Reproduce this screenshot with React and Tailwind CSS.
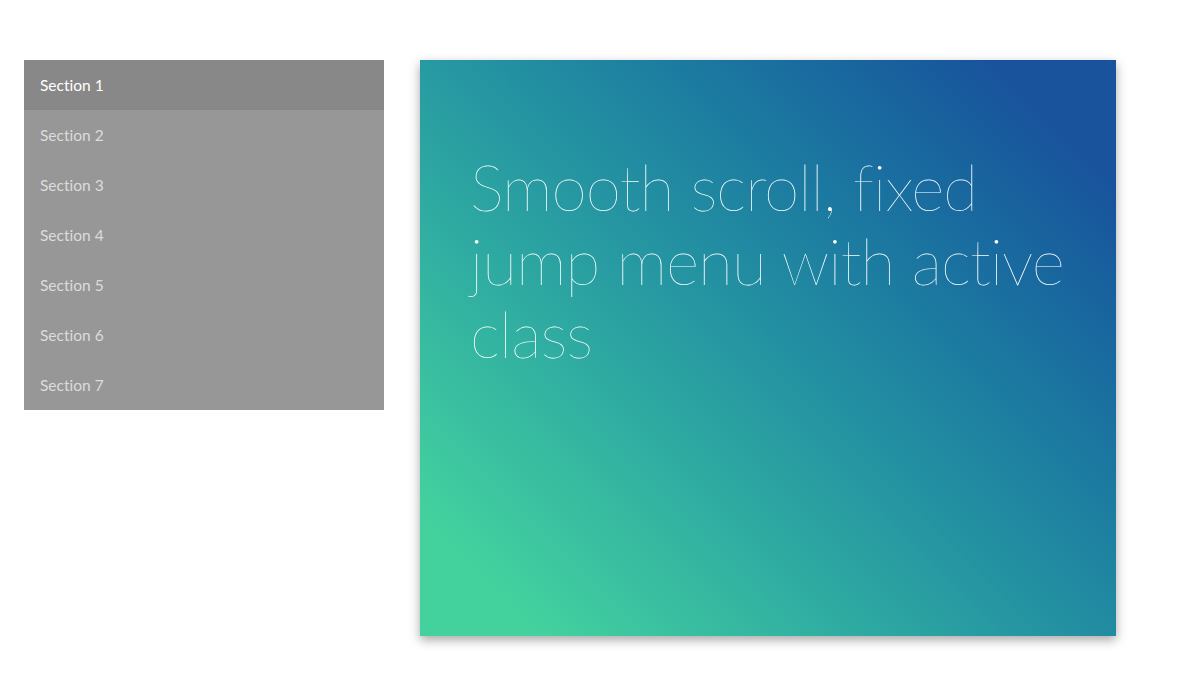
const SECTIONS = [1, 2, 3, 4, 5, 6, 7]

// ZWNJ keeps Lato from joining "ti" into a ligature
const ZWNJ = '\u200C'

export default function App() {
  const active = 1

  return (
    <div className="min-h-[682px] bg-white flex items-start gap-9 pt-[60px] pl-6 font-['Lato','Liberation_Sans',sans-serif]">
      {/* jump menu */}
      <nav className="w-[360px] flex flex-col">
        {SECTIONS.map(n => (
          <a key={n} href={'#section' + n}
            className={n === active
              ? 'h-[50px] flex items-center px-4 pt-0.5 text-[15.5px] bg-[#888888] text-white'
              : 'h-[50px] flex items-center px-4 pt-0.5 text-[15.5px] bg-[#979797] text-[#dcdcdc]'}>
            {`Sect${ZWNJ}ion ${n}`}
          </a>
        ))}
      </nav>

      {/* section 1 */}
      <section className="w-[696px] h-[576px] pl-[50px] pr-[40px] pt-[90px] bg-linear-45 from-[#43d19e] from-10% to-[#18539c] to-90% shadow-[0_4px_10px_rgba(0,0,0,0.35)]">
        <h1 className="text-[64px] leading-[1.15] tracking-[-1px] font-thin text-white">
          {`Smooth scroll, fixed jump menu with ac${ZWNJ}tive class`}
        </h1>
      </section>
    </div>
  )
}
